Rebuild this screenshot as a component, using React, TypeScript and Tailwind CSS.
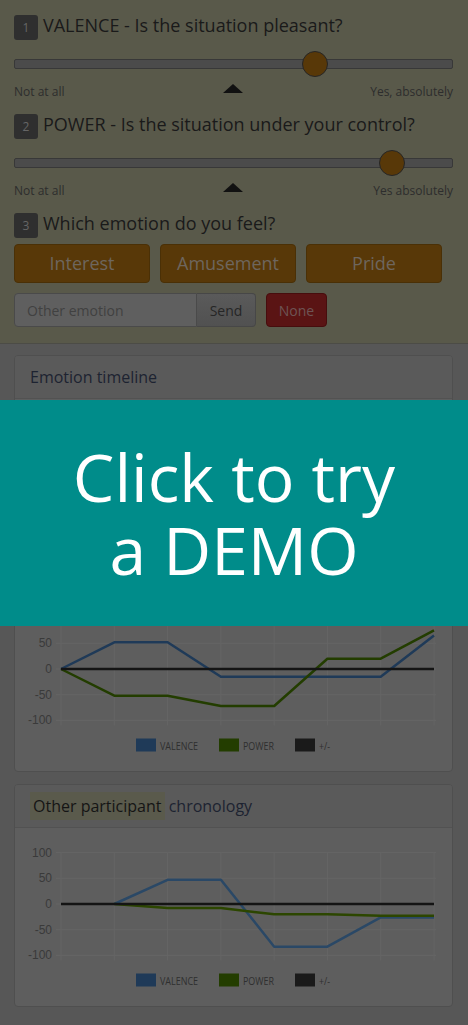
import React from "react";

type Series = { color: string; values: (number | null)[] };

const ticks = [100, 50, 0, -50, -100];
const xs = Array.from({ length: 8 }, (_, i) => 46 + i * 53.29);

function Chart({
  height,
  zero,
  legendY,
  series,
}: {
  height: number;
  zero: number;
  legendY: number;
  series: Series[];
}) {
  const y = (v: number) => zero - v * 0.514;

  const path = (values: (number | null)[]) =>
    values
      .map((v, i) => (v === null ? null : `${xs[i].toFixed(1)},${y(v).toFixed(1)}`))
      .filter(Boolean)
      .join(" ");

  const legend = [
    { label: "VALENCE", color: "#1f3a58", x: 121, w: 38 },
    { label: "POWER", color: "#233d00", x: 204, w: 31 },
    { label: "+/-", color: "#1a1a1a", x: 280, w: 11 },
  ];

  return (
    <svg width="437" height={height} className="block">
      {ticks.map((t) => (
        <g key={t}>
          <line x1="41" x2="421" y1={y(t)} y2={y(t)} stroke="#656565" strokeWidth="1" />
          <text
            x="37"
            y={y(t)}
            textAnchor="end"
            dominantBaseline="central"
            fontSize="12"
            fill="#3a3a3a"
            fontFamily="'Liberation Sans', Arial, sans-serif"
          >
            {t}
          </text>
        </g>
      ))}
      {xs.map((x) => (
        <line key={x} x1={x} x2={x} y1={y(100)} y2={y(-100) + 5} stroke="#656565" strokeWidth="1" />
      ))}
      {series.map((s, i) => (
        <polyline
          key={i}
          points={path(s.values)}
          fill="none"
          stroke={s.color}
          strokeWidth="2.5"
          strokeLinejoin="round"
        />
      ))}
      {legend.map((l) => (
        <g key={l.label}>
          <rect x={l.x} y={legendY - 6.5} width="20" height="13" fill={l.color} />
          <text
            x={l.x + 24}
            y={legendY + 0.5}
            dominantBaseline="central"
            fontSize="11"
            fill="#2f2f2f"
            textLength={l.w}
            lengthAdjust="spacingAndGlyphs"
            fontFamily="'Open Sans', sans-serif"
          >
            {l.label}
          </text>
        </g>
      ))}
    </svg>
  );
}

function Heading({ n, title }: { n: number; title: string }) {
  return (
    <div className="flex h-[25px] items-start gap-[5px]">
      <span className="flex h-[25px] w-[24px] items-center justify-center rounded-[3px] bg-[#2f2f2f] text-[12px] text-[#666666]">
        {n}
      </span>
      <h2 className="text-[18px] leading-[20px] text-[#1a1a1a]">{title}</h2>
    </div>
  );
}

function Question({
  n,
  title,
  value,
  left,
  right,
}: {
  n: number;
  title: string;
  value: number;
  left: string;
  right: string;
}) {
  return (
    <div className="mb-[12px]">
      <Heading n={n} title={title} />
      <div className="relative mt-[11px] flex h-[26px] items-center">
        <div className="h-[10px] w-full rounded-[2px] border border-[#383838] bg-[#4b4b4b]" />
        <div
          className="absolute top-0 h-[26px] w-[26px] rounded-full border border-[#262626] bg-[#583808]"
          style={{ left: `calc(${value}% - 13px)` }}
        />
      </div>
      <div className="mt-[5px] grid h-[20px] grid-cols-3 text-[12px] leading-[20px] text-[#2d2d2d]">
        <span>{left}</span>
        <span className="flex justify-center pt-[2px]">
          <span className="h-0 w-0 border-x-[10px] border-b-[9px] border-x-transparent border-b-[#111111]" />
        </span>
        <span className="text-right">{right}</span>
      </div>
    </div>
  );
}

function Card({ title, children }: { title: React.ReactNode; children: React.ReactNode }) {
  return (
    <div className="overflow-hidden rounded-[4px] border border-[#4f4f4f] bg-[#5e5e5e]">
      <div className="border-b border-[#525252] bg-[#5a5a5a] px-[15px] py-[10px] text-[16px] leading-[22px] text-[#1d2331]">
        {title}
      </div>
      {children}
    </div>
  );
}

export default function App() {
  const emotions = ["Interest", "Amusement", "Pride"];

  return (
    <div className="relative min-h-screen bg-[#575757] font-['Open_Sans',sans-serif]">
      <section className="border-b border-[#4c4c46] bg-[#59594a] pt-[15px] pr-[15px] pb-[16px] pl-[14px]">
        <Question
          n={1}
          title="VALENCE - Is the situation pleasant?"
          value={68.6}
          left="Not at all"
          right="Yes, absolutely"
        />
        <Question
          n={2}
          title="POWER - Is the situation under your control?"
          value={86.1}
          left="Not at all"
          right="Yes absolutely"
        />
        <Heading n={3} title="Which emotion do you feel?" />

        <div className="mt-[6px] flex gap-[10px]">
          {emotions.map((e) => (
            <button
              key={e}
              type="button"
              className="h-[39px] w-[136px] rounded-[4px] border border-[#4a3006] bg-[#583808] text-[18px] text-[#6e665e]"
            >
              {e}
            </button>
          ))}
        </div>

        <div className="mt-[10px] flex h-[34px] items-stretch">
          <input
            placeholder="Other emotion"
            className="w-[183px] rounded-l-[4px] border border-[#4a4a4a] bg-[#5f5f5f] px-[12px] text-[14px] text-[#2a2a2a] outline-none placeholder:text-[#414141]"
          />
          <button
            type="button"
            className="w-[59px] rounded-r-[4px] border border-l-0 border-[#474747] bg-gradient-to-b from-[#5a5a5a] to-[#515151] text-[14px] text-[#262626]"
          >
            Send
          </button>
          <button
            type="button"
            className="ml-[10px] w-[61px] rounded-[4px] border border-[#470d0d] bg-[#5a1414] text-[14px] text-[#6e5454]"
          >
            None
          </button>
        </div>
      </section>

      <main className="flex flex-col gap-[12px] pt-[11px] pr-[15px] pb-[18px] pl-[14px]">
        <Card title="Emotion timeline">
          <Chart
            height={372}
            zero={270}
            legendY={346}
            series={[
              { color: "#1f3a58", values: [0, 52, 52, -15, -15, -15, -15, 65] },
              { color: "#233d00", values: [0, -52, -52, -72, -72, 20, 20, 75] },
              { color: "#141414", values: [0, 0, 0, 0, 0, 0, 0, 0] },
            ]}
          />
        </Card>
        <Card
          title={
            <>
              <span className="bg-[#5a5a4c] px-[3px] py-[3px] text-[#151515]">Other participant</span>{" "}
              chronology
            </>
          }
        >
          <Chart
            height={178}
            zero={76}
            legendY={152}
            series={[
              { color: "#2a4866", values: [null, 0, 47, 47, -83, -83, -26, -26] },
              { color: "#2c4600", values: [null, 0, -8, -8, -20, -20, -23, -23] },
              { color: "#141414", values: [0, 0, 0, 0, 0, 0, 0, 0] },
            ]}
          />
        </Card>
      </main>

      <div className="fixed inset-0 flex items-center">
        <a
          href="#demo"
          className="flex h-[226px] w-full items-center justify-center bg-[#008c8a] text-center text-[66px] leading-[73px] text-white"
        >
          <span>
            Click to try
            <br />a DEMO
          </span>
        </a>
      </div>
    </div>
  );
}
